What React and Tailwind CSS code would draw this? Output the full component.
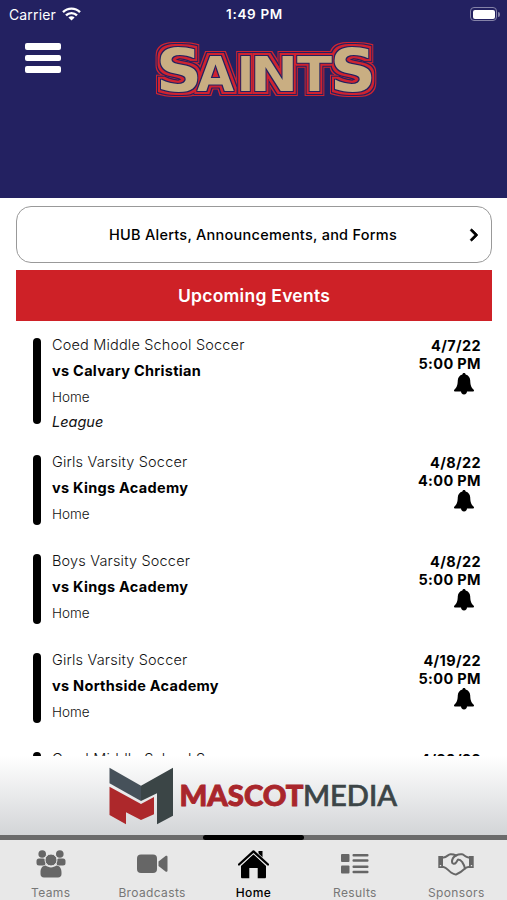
import { FaChevronRight } from 'react-icons/fa'

const events = [
  { team: 'Coed Middle School Soccer', opponent: 'vs Calvary Christian', place: 'Home', note: 'League', date: '4/7/22', time: '5:00 PM' },
  { team: 'Girls Varsity Soccer', opponent: 'vs Kings Academy', place: 'Home', date: '4/8/22', time: '4:00 PM' },
  { team: 'Boys Varsity Soccer', opponent: 'vs Kings Academy', place: 'Home', date: '4/8/22', time: '5:00 PM' },
  { team: 'Girls Varsity Soccer', opponent: 'vs Northside Academy', place: 'Home', date: '4/19/22', time: '5:00 PM' },
  { team: 'Coed Middle School Soccer', opponent: 'vs Kings Academy', place: 'Home', date: '4/20/22', time: '5:00 PM' },
]

const letters = [
  { c: 'S', x: 16, w: 46, size: 58 },
  { c: 'A', x: 57, w: 37, size: 48 },
  { c: 'I', x: 97, w: 17, size: 48 },
  { c: 'N', x: 110, w: 48, size: 48 },
  { c: 'T', x: 157, w: 35, size: 48 },
  { c: 'S', x: 190, w: 46, size: 58 },
]

function SaintsLogo() {
  return (
    <svg width="250" height="70" viewBox="0 0 250 70">
      <defs>
        {/* tan letters, navy line, red band, navy line, red edge */}
        <filter id="outline" x="-10%" y="-20%" width="120%" height="140%" colorInterpolationFilters="sRGB">
          <feMorphology in="SourceAlpha" operator="dilate" radius="1" result="d1" />
          <feMorphology in="SourceAlpha" operator="dilate" radius="3" result="d2" />
          <feMorphology in="SourceAlpha" operator="dilate" radius="4" result="d3" />
          <feMorphology in="SourceAlpha" operator="dilate" radius="5" result="d4" />
          <feFlood floodColor="#232161" result="navy" />
          <feFlood floodColor="#cf2330" result="red" />
          <feComposite in="navy" in2="d1" operator="in" result="c1" />
          <feComposite in="red" in2="d2" operator="in" result="c2" />
          <feComposite in="navy" in2="d3" operator="in" result="c3" />
          <feComposite in="red" in2="d4" operator="in" result="c4" />
          <feMerge>
            <feMergeNode in="c4" />
            <feMergeNode in="c3" />
            <feMergeNode in="c2" />
            <feMergeNode in="c1" />
            <feMergeNode in="SourceGraphic" />
          </feMerge>
        </filter>
      </defs>
      <g fill="#c9ae82" fontFamily="DejaVu Sans" fontWeight="700" filter="url(#outline)">
        {letters.map((t) => (
          <text key={t.x} x={t.x} y="56" fontSize={t.size} textLength={t.w} lengthAdjust="spacingAndGlyphs">{t.c}</text>
        ))}
      </g>
    </svg>
  )
}

function Wifi() {
  return (
    <svg width="19" height="14" viewBox="0 0 19 14" fill="none" stroke="#fff" strokeWidth="2.4">
      <path d="M1 5.2a12 12 0 0 1 17 0" />
      <path d="M4 8.4a7.8 7.8 0 0 1 11 0" />
      <path d="M9.5 13.6 6.4 10.6a4.4 4.4 0 0 1 6.2 0z" fill="#fff" stroke="none" />
    </svg>
  )
}

function Bell() {
  return (
    <svg width="20" height="22" viewBox="0 0 20 22" fill="#000">
      <path d="M10 0c1 0 1.500.6 1.600 1.400 2.900.8 4.400 3 4.600 5.800.2 4.300.6 6.800 3.500 9.600.6.700.300 1.700-.6 1.700H.9c-.9 0-1.200-1-.6-1.700 2.900-2.800 3.300-5.300 3.500-9.600.2-2.800 1.700-5 4.600-5.800C8.500.6 9 0 10 0z" />
      <path d="M7 18h6c0 2.200-1.200 3.400-3 3.400S7 20.200 7 18z" />
    </svg>
  )
}

function TeamIcon() {
  return (
    <svg width="30" height="28" viewBox="0 0 30 28" fill="#666">
      <circle cx="6.200" cy="4" r="3.800" />
      <circle cx="23.800" cy="4" r="3.800" />
      <rect x="0.500" y="8.500" width="9" height="7" rx="2.500" />
      <rect x="20.500" y="8.500" width="9" height="7" rx="2.500" />
      <circle cx="15" cy="10" r="6" stroke="#e8e8e8" strokeWidth="1" />
      <path d="M9.500 15.600c3.300 2.400 7.700 2.400 11 0 3.500.4 5 3 5 7v1.400c0 2.200-1.300 3.500-3.500 3.500H8c-2.200 0-3.500-1.300-3.500-3.500v-1.400c0-4 1.500-6.600 5-7z" />
    </svg>
  )
}

function VideoIcon() {
  return (
    <svg width="31" height="20" viewBox="0 0 31 20" fill="#666">
      <rect x="0" y="0.500" width="20" height="18.500" rx="4" />
      <path d="M21.500 7.500 28.500 2c1-.7 2-.3 2 1v13.500c0 1.300-1 1.700-2 1L21.500 12z" />
    </svg>
  )
}

function HomeIcon() {
  return (
    <svg width="31" height="29" viewBox="0 0 31 29">
      <path d="M20.500 1h4v9l-4-4z" />
      <path d="M3 15.500 15.500 4 28 15.500V27c0 .8-.5 1.300-1.300 1.300h-7V18h-8.400v10.300h-7C3.500 28.300 3 27.800 3 27z" />
      <path d="M1 15 15.500 1.600 30 15" fill="none" stroke="#e8e8e8" strokeWidth="4" />
      <path d="M1 14.500 15.500 1.400 30 14.500" fill="none" stroke="#000" strokeWidth="2.300" strokeLinecap="round" strokeLinejoin="round" />
    </svg>
  )
}

function ResultsIcon() {
  return (
    <svg width="28" height="20" viewBox="0 0 28 20" fill="#666">
      <rect x="0" y="0" width="8.500" height="8" rx="1" />
      <rect x="0" y="11.500" width="8.500" height="8" rx="1" />
      <rect x="11.500" y="0" width="16" height="2.600" rx="1" />
      <rect x="11.500" y="5.200" width="16" height="2.600" rx="1" />
      <rect x="11.500" y="11.500" width="16" height="2.600" rx="1" />
      <rect x="11.500" y="16.700" width="16" height="2.600" rx="1" />
    </svg>
  )
}

function HandshakeIcon() {
  return (
    <svg width="36" height="23" viewBox="0 0 36 23" fill="none" stroke="#666" strokeWidth="2" strokeLinejoin="round" strokeLinecap="round">
      <path d="M5.500 4.500C9 4 10 1.500 12.500 1.200c2.500-.2 4 .5 5.500 1.300 1.500-.8 3.500-1.500 6-1.200 2.500.4 3 2.700 6.500 3.200" />
      <path d="M5.500 14c3 .3 4.500 3.500 7.500 5.500 2.200 1.500 4 2.300 5.500 1.800 3.500-1.300 6-3.500 8.500-5.800 1.200-1 2-1.500 3.500-1.500" />
      <path d="M18 2.500c-2.500 1.300-4 4-4 6.500 0 2 2.700 2.500 4 .7l2-3.200c2 0 3 .8 4.200 2.500 1.500 2.300 2.300 3.500 2.800 6.500" />
      <rect x="0.300" y="3" width="4.700" height="12" fill="#666" stroke="none" />
      <rect x="31" y="3" width="4.700" height="12" fill="#666" stroke="none" />
      <path d="M2.300 12.700h.4M33.300 12.700h.4" stroke="#e8e8e8" strokeWidth="1.200" />
    </svg>
  )
}

function MascotLogo() {
  return (
    <svg width="290" height="60" viewBox="0 0 290 60">
      <path d="M1.500.7 33 18.700v15.300L1.500 16.300z" fill="#46515a" />
      <path d="M33 18.700 65 .7v48l-16 8.600v-31L33 34z" fill="#3b4546" />
      <path d="M1.500 19.700 33 37l13-7v17.300L33 53l-15-7.700v12L1.500 48z" fill="#ad282b" />
      <text x="71.500" y="39" fontFamily="Lato" fontWeight="900" fontSize="28" fill="#a9262c" stroke="#a9262c" strokeWidth="0.900" textLength="124" lengthAdjust="spacingAndGlyphs">MASCOT</text>
      <text x="195" y="39" fontFamily="Lato" fontWeight="500" fontSize="28" fill="#3c4547" stroke="#3c4547" strokeWidth="0.700" textLength="94" lengthAdjust="spacingAndGlyphs">MEDIA</text>
    </svg>
  )
}

const tabs = [
  { label: 'Teams', icon: <TeamIcon /> },
  { label: 'Broadcasts', icon: <VideoIcon /> },
  { label: 'Home', icon: <HomeIcon />, active: true },
  { label: 'Results', icon: <ResultsIcon /> },
  { label: 'Sponsors', icon: <HandshakeIcon /> },
]

function EventRow({ event }) {
  return (
    <div className="flex pr-[11px] pb-[21px] pl-[17px]">
      <div className={`mt-[6px] w-[7.5px] shrink-0 rounded-full bg-black ${event.note ? 'h-[86px]' : 'h-[70px]'}`} />
      <div className="ml-[11.5px] flex-1 whitespace-nowrap">
        <p className="text-[14.5px] leading-[26px] font-light tracking-[0.012em] text-[#111]">{event.team}</p>
        <p className="text-[14.5px] leading-[26px] font-bold tracking-[0.02em] text-black">{event.opponent}</p>
        <p className="text-[13.5px] leading-[26px] font-light text-[#111]">{event.place}</p>
        {event.note && <p className="relative top-[3px] text-[14.5px] leading-[18px] text-[#111] italic">{event.note}</p>}
      </div>
      <div className="flex h-[60px] flex-col items-end pt-[5px] text-[14.5px] leading-[18px] font-bold tracking-[0.025em] text-black">
        <p>{event.date}</p>
        <p>{event.time}</p>
        <div className="mr-[7px]"><Bell /></div>
      </div>
    </div>
  )
}

export default function App() {
  return (
    <div className="flex h-[900px] w-[507px] flex-col overflow-hidden bg-white font-['Inter',sans-serif]">
      <header className="h-[198px] shrink-0 bg-[#232161] text-white">
        <div className="grid h-[28px] grid-cols-3 items-center pr-[7px] pl-[9px] text-[14px]">
          <div className="flex items-center gap-[6px]">
            <span className="tracking-[0.01em]">Carrier</span>
            <Wifi />
          </div>
          <span className="text-center text-[13.5px] font-semibold tracking-[0.05em]">1:49 PM</span>
          <div className="flex items-center justify-end">
            <div className="h-[14px] w-[27px] rounded-[4px] border border-[#8583a8] p-[1.5px]">
              <div className="h-full rounded-[2px] bg-white" />
            </div>
            <div className="ml-px h-[5px] w-[2px] rounded-r bg-[#8583a8]" />
          </div>
        </div>
        <div className="flex pt-[7px]">
          <div className="mt-[8px] ml-[25px] flex w-[115px] flex-col gap-[5px]">
            <div className="h-[6.5px] w-[35.5px] rounded-[2px] bg-white" />
            <div className="h-[6.5px] w-[35.5px] rounded-[2px] bg-white" />
            <div className="h-[6.5px] w-[35.5px] rounded-[2px] bg-white" />
          </div>
          <SaintsLogo />
        </div>
      </header>

      <main className="h-[558px] shrink-0 overflow-hidden pt-[8px] pr-[15px] pl-[16px]">
        <div className="flex h-[57px] items-center rounded-[15px] border border-[#999] pr-[10px] pl-[22px]">
          <span className="flex-1 text-center text-[14.5px] font-medium tracking-[0.018em] text-black">HUB Alerts, Announcements, and Forms</span>
          <FaChevronRight size={14} strokeWidth={30} stroke="#000" />
        </div>
        <h2 className="mt-[7px] flex h-[51px] items-center justify-center bg-[#ce2127] pt-px text-[17.5px] font-semibold tracking-[0.015em] text-white">Upcoming Events</h2>
        <div className="pt-[11px]">
          {events.map((e, i) => <EventRow key={i} event={e} />)}
        </div>
      </main>

      <div className="flex h-[79px] shrink-0 justify-center bg-gradient-to-b from-white to-[#d3d5d7] pt-[11px] pr-[2px]">
        <MascotLogo />
      </div>

      <div className="h-[5px] shrink-0 bg-[#6b6b6b]">
        <div className="mx-auto h-full w-[101px] rounded-full bg-black" />
      </div>
      <nav className="grid h-[60px] shrink-0 grid-cols-5 bg-[#e8e8e8]">
        {tabs.map((t) => (
          <div key={t.label} className={`flex flex-col items-center ${t.active ? 'text-black' : 'text-[#666]'}`}>
            <div className="mt-[6px] flex h-[36px] items-center">{t.icon}</div>
            <span className={`mt-[3px] text-[12px] leading-[16px] tracking-[0.03em] ${t.active ? 'font-medium' : 'text-[#777]'}`}>{t.label}</span>
          </div>
        ))}
      </nav>
    </div>
  )
}
